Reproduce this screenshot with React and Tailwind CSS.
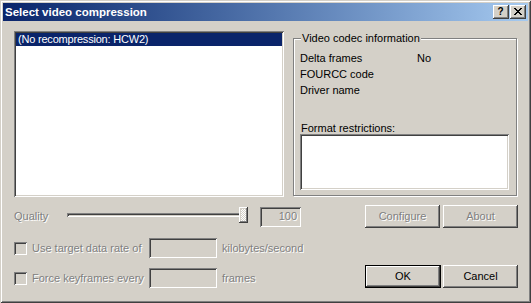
import React from "react";

const raised =
  "shadow-[inset_-1px_-1px_0_#404040,inset_1px_1px_0_#fff,inset_-2px_-2px_0_#808080,inset_2px_2px_0_#d4d0c8]";
const sunken =
  "shadow-[inset_1px_1px_0_#808080,inset_-1px_-1px_0_#fff,inset_2px_2px_0_#404040,inset_-2px_-2px_0_#d4d0c8]";
const dis = "text-[#808080] [text-shadow:1px_1px_0_#fff]";

function Checkbox() {
  return <div className={`w-[13px] h-[13px] bg-[#d4d0c8] shrink-0 ${sunken}`} />;
}

export default function App() {
  return (
    <div className="w-[531px] h-[303px] bg-[#d4d0c8] p-[3px] flex flex-col font-['Liberation_Sans',Arial,sans-serif] text-[11px] text-black shadow-[inset_1px_1px_0_#d4d0c8,inset_-1px_-1px_0_#404040,inset_2px_2px_0_#fff,inset_-2px_-2px_0_#808080]">
      {/* Title bar */}
      <div className="h-[18px] flex items-center bg-gradient-to-r from-[#0a246a] to-[#a6caf0] pl-[2px] pr-[2px]">
        <span className="text-white font-bold text-[11.5px] leading-[18px]">Select video compression</span>
        <div className="ml-auto flex">
          <div className={`w-[16px] h-[14px] bg-[#d4d0c8] flex items-center justify-center ${raised}`}>
            <span className="font-bold text-[10px] leading-none pb-[1px] pr-[1px]">?</span>
          </div>
          <div className={`w-[16px] h-[14px] ml-[1px] bg-[#d4d0c8] flex items-center justify-center ${raised}`}>
            <svg width="8" height="7" viewBox="0 0 8 7" className="mb-[1px] mr-[1px]" shapeRendering="crispEdges">
              <path d="M0 0h2v1h-2zM6 0h2v1h-2zM1 1h2v1h-2zM5 1h2v1h-2zM2 2h4v1h-4zM3 3h2v1h-2zM2 4h4v1h-4zM1 5h2v1h-2zM5 5h2v1h-2zM0 6h2v1h-2zM6 6h2v1h-2z" fill="#000" />
            </svg>
          </div>
        </div>
      </div>

      {/* Body */}
      <div className="flex-1 pl-[11px] pt-[10px]">
        <div className="flex h-[166px]">
          {/* list box */}
          <div className={`w-[270px] h-[166px] bg-white p-[2px] ${sunken}`}>
            <div className="h-[13px] bg-[#0a246a] text-white pl-[2px] leading-[13px] tracking-[-0.2px]">
              (No recompression: HCW2)
            </div>
          </div>
          {/* group box */}
          <div className="ml-[9px] pt-[7px]">
            <div className="relative w-[224px] h-[158px] border border-[#808080] shadow-[inset_1px_1px_0_#fff,1px_1px_0_#fff] pl-[6px] pt-[11px]">
              <span className="absolute top-[-7px] left-[7px] px-[1px] bg-[#d4d0c8] leading-[13px]">
                Video codec information
              </span>
              <div className="grid grid-cols-[117px_1fr] leading-[16px]">
                <span>Delta frames</span>
                <span>No</span>
                <span>FOURCC code</span>
                <span></span>
                <span>Driver name</span>
                <span></span>
              </div>
              <div className="mt-[24px] pl-[1px] leading-[12px]">Format restrictions:</div>
              <div className={`w-[209px] h-[56px] bg-white ${sunken}`} />
            </div>
          </div>
        </div>

        {/* bottom controls */}
        <div className="flex mt-[8px]">
          <div className="w-[351px]">
            <div className="h-[23px] flex items-center">
              <span className={`w-[53px] ${dis}`}>Quality</span>
              <div className="relative w-[179px] h-[23px] flex items-center">
                <div className={`w-full h-[4px] mt-[-3px] ${sunken}`} />
                <div
                  className={`absolute left-[172px] top-[2px] w-[9px] h-[16px] bg-[repeating-conic-gradient(#fff_0_25%,#d4d0c8_0_50%)] bg-[length:2px_2px] ${raised}`}
                />
              </div>
              <div className={`ml-[14px] w-[41px] h-[20px] bg-[#d4d0c8] flex items-center justify-end pr-[4px] ${sunken}`}>
                <span className={dis}>100</span>
              </div>
            </div>
            <div className="mt-[10px] h-[20px] flex items-center">
              <Checkbox />
              <span className={`ml-[5px] w-[117px] ${dis}`}>Use target data rate of</span>
              <div className={`w-[68px] h-[20px] bg-[#d4d0c8] ${sunken}`} />
              <span className={`ml-[5px] ${dis}`}>kilobytes/second</span>
            </div>
            <div className="mt-[10px] h-[20px] flex items-center">
              <Checkbox />
              <span className={`ml-[5px] w-[117px] ${dis}`}>Force keyframes every</span>
              <div className={`w-[68px] h-[20px] bg-[#d4d0c8] ${sunken}`} />
              <span className={`ml-[5px] ${dis}`}>frames</span>
            </div>
          </div>
          <div className="flex flex-col">
            <div className="flex gap-[3px]">
              <div className={`w-[75px] h-[23px] flex items-center justify-center ${raised}`}>
                <span className={dis}>Configure</span>
              </div>
              <div className={`w-[75px] h-[23px] flex items-center justify-center ${raised}`}>
                <span className={dis}>About</span>
              </div>
            </div>
            <div className="flex gap-[2px] mt-[37px]">
              <div className="w-[76px] h-[23px] flex items-center justify-center shadow-[inset_0_0_0_1px_#000,inset_-2px_-2px_0_#404040,inset_2px_2px_0_#fff,inset_-3px_-3px_0_#808080]">
                <span>OK</span>
              </div>
              <div className={`w-[75px] h-[23px] flex items-center justify-center ${raised}`}>
                <span>Cancel</span>
              </div>
            </div>
          </div>
        </div>
      </div>
    </div>
  );
}
